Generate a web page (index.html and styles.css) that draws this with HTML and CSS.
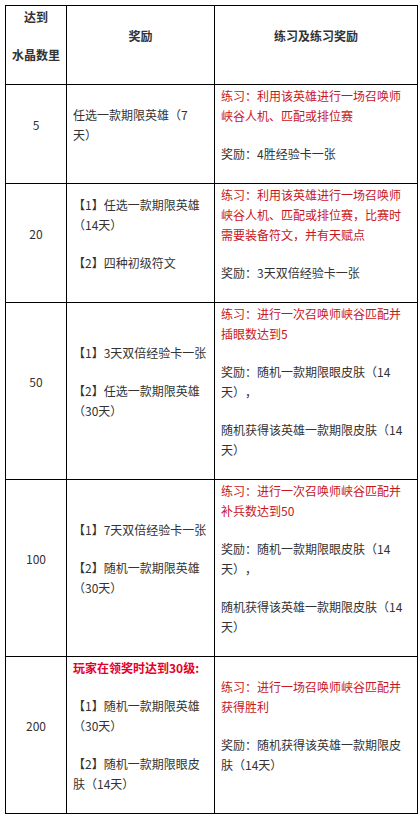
FILE: index.html
```html
<!DOCTYPE html>
<html lang="zh-CN">
<head>
<meta charset="utf-8">
<title>水晶奖励</title>
<link rel="stylesheet" href="styles.css">
</head>
<body>
<table class="reward-table">
  <colgroup>
    <col class="c1">
    <col class="c2">
    <col class="c3">
  </colgroup>
  <thead>
    <tr>
      <th><p>达到</p><p>水晶数里</p></th>
      <th><p>奖励</p></th>
      <th><p>练习及练习奖励</p></th>
    </tr>
  </thead>
  <tbody>
    <tr>
      <td class="num"><p>5</p></td>
      <td><p>任选一款期限英雄（7天）</p></td>
      <td><p class="red">练习：利用该英雄进行一场召唤师峡谷人机、匹配或排位赛</p><p>奖励：4胜经验卡一张</p></td>
    </tr>
    <tr>
      <td class="num"><p>20</p></td>
      <td><p>【1】任选一款期限英雄（14天）</p><p>【2】四种初级符文</p></td>
      <td><p class="red">练习：利用该英雄进行一场召唤师峡谷人机、匹配或排位赛，比赛时需要装备符文，并有天赋点</p><p>奖励：3天双倍经验卡一张</p></td>
    </tr>
    <tr>
      <td class="num"><p>50</p></td>
      <td><p>【1】3天双倍经验卡一张</p><p>【2】任选一款期限英雄（30天）</p></td>
      <td><p class="red">练习：进行一次召唤师峡谷匹配并插眼数达到5</p><p>奖励：随机一款期限眼皮肤（14天），</p><p>随机获得该英雄一款期限皮肤（14天）</p></td>
    </tr>
    <tr>
      <td class="num"><p>100</p></td>
      <td><p>【1】7天双倍经验卡一张</p><p>【2】随机一款期限英雄（30天）</p></td>
      <td><p class="red">练习：进行一次召唤师峡谷匹配并补兵数达到50</p><p>奖励：随机一款期限眼皮肤（14天），</p><p>随机获得该英雄一款期限皮肤（14天）</p></td>
    </tr>
    <tr>
      <td class="num"><p>200</p></td>
      <td><p class="red-bold">玩家在领奖时达到30级:</p><p>【1】随机一款期限英雄（30天）</p><p>【2】随机一款期限眼皮肤（14天）</p></td>
      <td><p class="red">练习：进行一场召唤师峡谷匹配并获得胜利</p><p>奖励：随机获得该英雄一款期限皮肤（14天）</p></td>
    </tr>
  </tbody>
</table>
</body>
</html>
```
FILE: styles.css
```css
html, body {
  margin: 0;
  padding: 0;
  background: #ffffff;
}

body {
  padding: 5px 0 0 5px;
  font-family: "Noto Sans CJK SC", "Noto Sans", sans-serif;
  font-size: 12px;
  line-height: 20px;
  color: #333333;
  text-spacing-trim: space-all;
}

.reward-table {
  border-collapse: collapse;
  table-layout: fixed;
  width: 412px;
}

.c1 { width: 61px; }
.c2 { width: 148px; }
.c3 { width: 203px; }

.reward-table th,
.reward-table td {
  border: 1px solid #000000;
  padding: 1px 6px;
  vertical-align: middle;
  text-align: left;
  font-weight: normal;
}

.reward-table th {
  text-align: center;
  font-weight: bold;
  color: #333333;
}

.reward-table td.num {
  text-align: center;
}

.reward-table p {
  margin: 0 0 18px;
}

.red {
  color: #c8161d;
}

.red-bold {
  color: #e3002b;
  font-weight: bold;
}
```
